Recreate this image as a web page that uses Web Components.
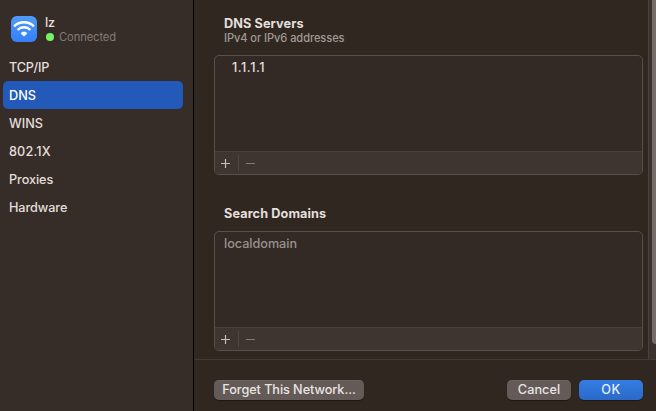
<!DOCTYPE html>
<html lang="en">
<head>
<meta charset="utf-8">
<title>Network settings</title>
<style>
html,body{margin:0;height:100%;overflow:hidden;background:#302721}
body{font-family:Inter,"Liberation Sans",sans-serif;font-size:12.7px;font-weight:500;color:#e3dfdc}
</style>
</head>
<body>
<network-sheet></network-sheet>
<script>
const define = (name, html, setup) => customElements.define(name, class extends HTMLElement {
  connectedCallback() {
    if (this.shadowRoot) return;
    this.attachShadow({ mode: 'open' }).innerHTML = html;
    if (setup) setup(this, this.shadowRoot);
  }
});

// A single line of text whose tracking is tuned to a given advance width.
define('tracked-text', `<style>:host{display:inline-block;white-space:nowrap}span{display:inline-block}</style><span><slot></slot></span>`, (host, root) => {
  const span = root.querySelector('span'), target = +host.getAttribute('width');
  const n = host.textContent.length;
  const natural = span.getBoundingClientRect().width;
  span.style.letterSpacing = ((target - natural) / n).toFixed(3) + 'px';
});

define('wifi-badge', `<style>:host{display:block;width:26px;height:26px}svg{display:block}</style>
<svg width="26" height="26" viewBox="0 0 26 26"><defs><linearGradient id="g" x2="0" y2="1"><stop stop-color="#4f9bf8"/><stop offset="1" stop-color="#347ff6"/></linearGradient></defs>
<rect width="26" height="26" rx="5.8" fill="url(#g)"/>
<g fill="none" stroke="#fff" stroke-width="2.4" stroke-linecap="butt"><path d="M3.1 10.3a14 14 0 0 1 19.8 0"/><path d="M6.6 13.9a9.05 9.05 0 0 1 12.8 0"/></g>
<path d="M13 20.2 9.9 17.2a4.4 4.4 0 0 1 6.2 0z" fill="#fff" stroke="#fff" stroke-width=".6" stroke-linejoin="round"/></svg>`);

define('network-header', `<style>:host{display:flex;padding:16px 0 0 11px;height:37px;gap:8px}
.info{display:flex;flex-direction:column}.name{line-height:15px;height:15px;margin-top:-1px}
.status{display:flex;align-items:center;gap:5px;height:13px;line-height:13px;font-size:11.2px;font-weight:400;color:#817b77}
.status tracked-text{padding-top:2px}
i{width:8px;height:8px;border-radius:50%;background:#74f663;margin-left:1px}</style>
<wifi-badge></wifi-badge><div class="info"><div class="name"><tracked-text width="10">lz</tracked-text></div>
<div class="status"><i></i><tracked-text width="57">Connected</tracked-text></div></div>`);

define('nav-item', `<style>:host{display:flex;align-items:center;height:28px;box-sizing:border-box;padding-left:6px;border-radius:5px}
:host([selected]){background:#2359b8;color:#fff}</style><slot></slot>`);

define('side-bar', `<style>:host{display:block;width:193px;flex:none;background:#362d28;border-right:1px solid #000}
nav{padding:0 10px 0 3px}</style><network-header></network-header><nav>
<nav-item><tracked-text width="40">TCP/IP</tracked-text></nav-item>
<nav-item selected><tracked-text width="27">DNS</tracked-text></nav-item>
<nav-item><tracked-text width="34">WINS</tracked-text></nav-item>
<nav-item><tracked-text width="41.7">802.1X</tracked-text></nav-item>
<nav-item><tracked-text width="44.2">Proxies</tracked-text></nav-item>
<nav-item><tracked-text width="58.3">Hardware</tracked-text></nav-item></nav>`);

define('list-box', `<style>:host{display:flex;flex-direction:column;height:120px;box-sizing:border-box;border:1px solid #584f49;border-radius:5px;background:#342a25;overflow:hidden}
.rows{flex:1;line-height:24px}
.bar{height:22px;background:#3e3530;border-top:1px solid #49403b;display:flex;align-items:center}svg{display:block}</style>
<div class="rows"><slot></slot></div><div class="bar"><svg width="46" height="22" viewBox="0 0 46 22" fill="none"><path d="M6 11.5h9M10.5 7v9" stroke="#c3bdb9" stroke-width="1.2"/><path d="M23.5 3v16" stroke="#514842"/><path d="M31 11.5h9" stroke="#827a75" stroke-width="1.2"/></svg></div>`);

define('push-button', `<style>:host{display:flex;align-items:center;justify-content:center;height:20px;box-sizing:border-box;padding-bottom:1px;border-radius:5px;background:#645b58;color:#e8e5e3;box-shadow:0 .5px 1px #0006,inset 0 .5px #746b67}
:host([primary]){background:linear-gradient(#357ce3,#2a69c9);color:#e6effb;box-shadow:0 .5px 1px #0006}</style><slot></slot>`);

define('scroll-track', `<style>:host{display:block;width:7px;flex:none;border-left:1px solid #4a413c;background:#3b322d;overflow:hidden}
div{margin-left:3px;width:8px;height:344px;border-radius:0 0 4px 4px;background:#746d69}</style><div></div>`);

define('network-sheet', `<style>:host{display:flex;width:656px;height:411px}
main{flex:1;display:flex;flex-direction:column;min-width:0}
.scroll{height:359px;display:flex}.content{flex:1;padding:0 5px 0 20px;box-sizing:border-box}
h2{font-size:12.7px;font-weight:700;line-height:16px;margin:0;padding-left:10px}
h2.first{padding-top:15.5px}h2.second{padding-top:30.5px;margin-bottom:9.5px}
.sub{padding-left:10px;height:23.5px;font-size:11.1px;line-height:13px;color:#a09a96}
.entry{padding-left:17px}.hint{padding-left:9px;color:#99928d}
footer{flex:1;border-top:1px solid #443a34;display:flex;align-items:flex-start;padding:20px 13px 0 20px}
.forget{width:150px;margin-right:auto}.small{width:64px}.small+.small{margin-left:8px}</style>
<side-bar></side-bar><main><section class="scroll"><div class="content">
<h2 class="first"><tracked-text width="79.7">DNS Servers</tracked-text></h2>
<div class="sub"><tracked-text width="120.5">IPv4 or IPv6 addresses</tracked-text></div>
<list-box><div class="entry"><tracked-text width="33">1.1.1.1</tracked-text></div></list-box>
<h2 class="second"><tracked-text width="102.3">Search Domains</tracked-text></h2>
<list-box><div class="hint"><tracked-text width="73">localdomain</tracked-text></div></list-box>
</div><scroll-track></scroll-track></section>
<footer><push-button class="forget"><tracked-text width="133.5">Forget This Network...</tracked-text></push-button>
<push-button class="small"><tracked-text width="42.3">Cancel</tracked-text></push-button>
<push-button class="small" primary><tracked-text width="19.5">OK</tracked-text></push-button></footer></main>`);
</script>
</body>
</html>
